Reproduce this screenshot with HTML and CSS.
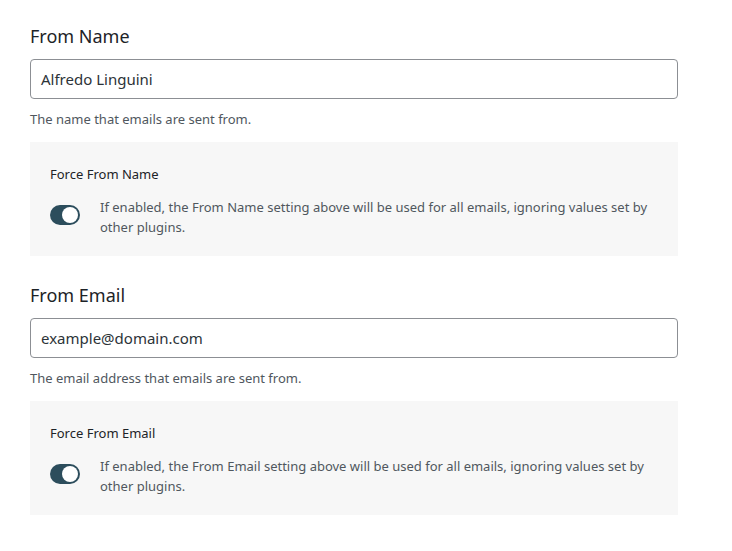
FILE: index.html
```html
<!DOCTYPE html>
<html>
<head>
<meta charset="utf-8">
<link rel="stylesheet" href="styles.css">
</head>
<body>
<div class="page">
  <section class="field">
    <h2 class="field-title">From Name</h2>
    <div class="input">Alfredo Linguini</div>
    <p class="help">The name that emails are sent from.</p>
    <div class="force-box">
      <div class="force-label">Force From Name</div>
      <div class="force-row">
        <span class="toggle"><span class="knob"></span></span>
        <p class="force-desc">If enabled, the From Name setting above will be used for all emails, ignoring values set by other plugins.</p>
      </div>
    </div>
  </section>
  <section class="field">
    <h2 class="field-title">From Email</h2>
    <div class="input">example@domain.com</div>
    <p class="help">The email address that emails are sent from.</p>
    <div class="force-box">
      <div class="force-label">Force From Email</div>
      <div class="force-row">
        <span class="toggle"><span class="knob"></span></span>
        <p class="force-desc">If enabled, the From Email setting above will be used for all emails, ignoring values set by other plugins.</p>
      </div>
    </div>
  </section>
</div>
</body>
</html>
```

FILE: styles.css
```css
html, body {
  margin: 0;
  padding: 0;
  background: #ffffff;
}
body {
  font-family: "Noto Sans", "Open Sans", sans-serif;
  color: #1d2327;
}
.page {
  width: 648px;
  padding: 24px 30px 0 30px;
  display: flex;
  flex-direction: column;
  gap: 27px;
}
.field {
  display: flex;
  flex-direction: column;
}
.field-title {
  margin: 0;
  font-size: 18px;
  line-height: 24px;
  font-weight: 400;
  color: #1d2327;
}
.input {
  margin-top: 11px;
  box-sizing: border-box;
  height: 40px;
  border: 1px solid #8c8f94;
  border-radius: 4px;
  padding: 0 10px;
  display: flex;
  align-items: center;
  font-size: 15px;
  color: #2c3338;
}
.help {
  margin: 11px 0 0 0;
  font-size: 13px;
  line-height: 18px;
  color: #50575e;
}
.force-box {
  margin-top: 14px;
  background: #f7f7f7;
  padding: 20px 20px 19px 20px;
}
.force-label {
  font-size: 13px;
  line-height: 24px;
  color: #1d2327;
}
.force-row {
  margin-top: 11px;
  display: flex;
  align-items: flex-start;
  gap: 20px;
}
.toggle {
  flex: none;
  margin-top: 8px;
  width: 30px;
  height: 20px;
  border-radius: 10px;
  background: #2c4d5c;
  position: relative;
}
.knob {
  position: absolute;
  top: 2px;
  right: 2px;
  width: 16px;
  height: 16px;
  border-radius: 50%;
  background: #ffffff;
}
.force-desc {
  margin: 0;
  font-size: 13px;
  line-height: 20px;
  color: #50575e;
}
```
